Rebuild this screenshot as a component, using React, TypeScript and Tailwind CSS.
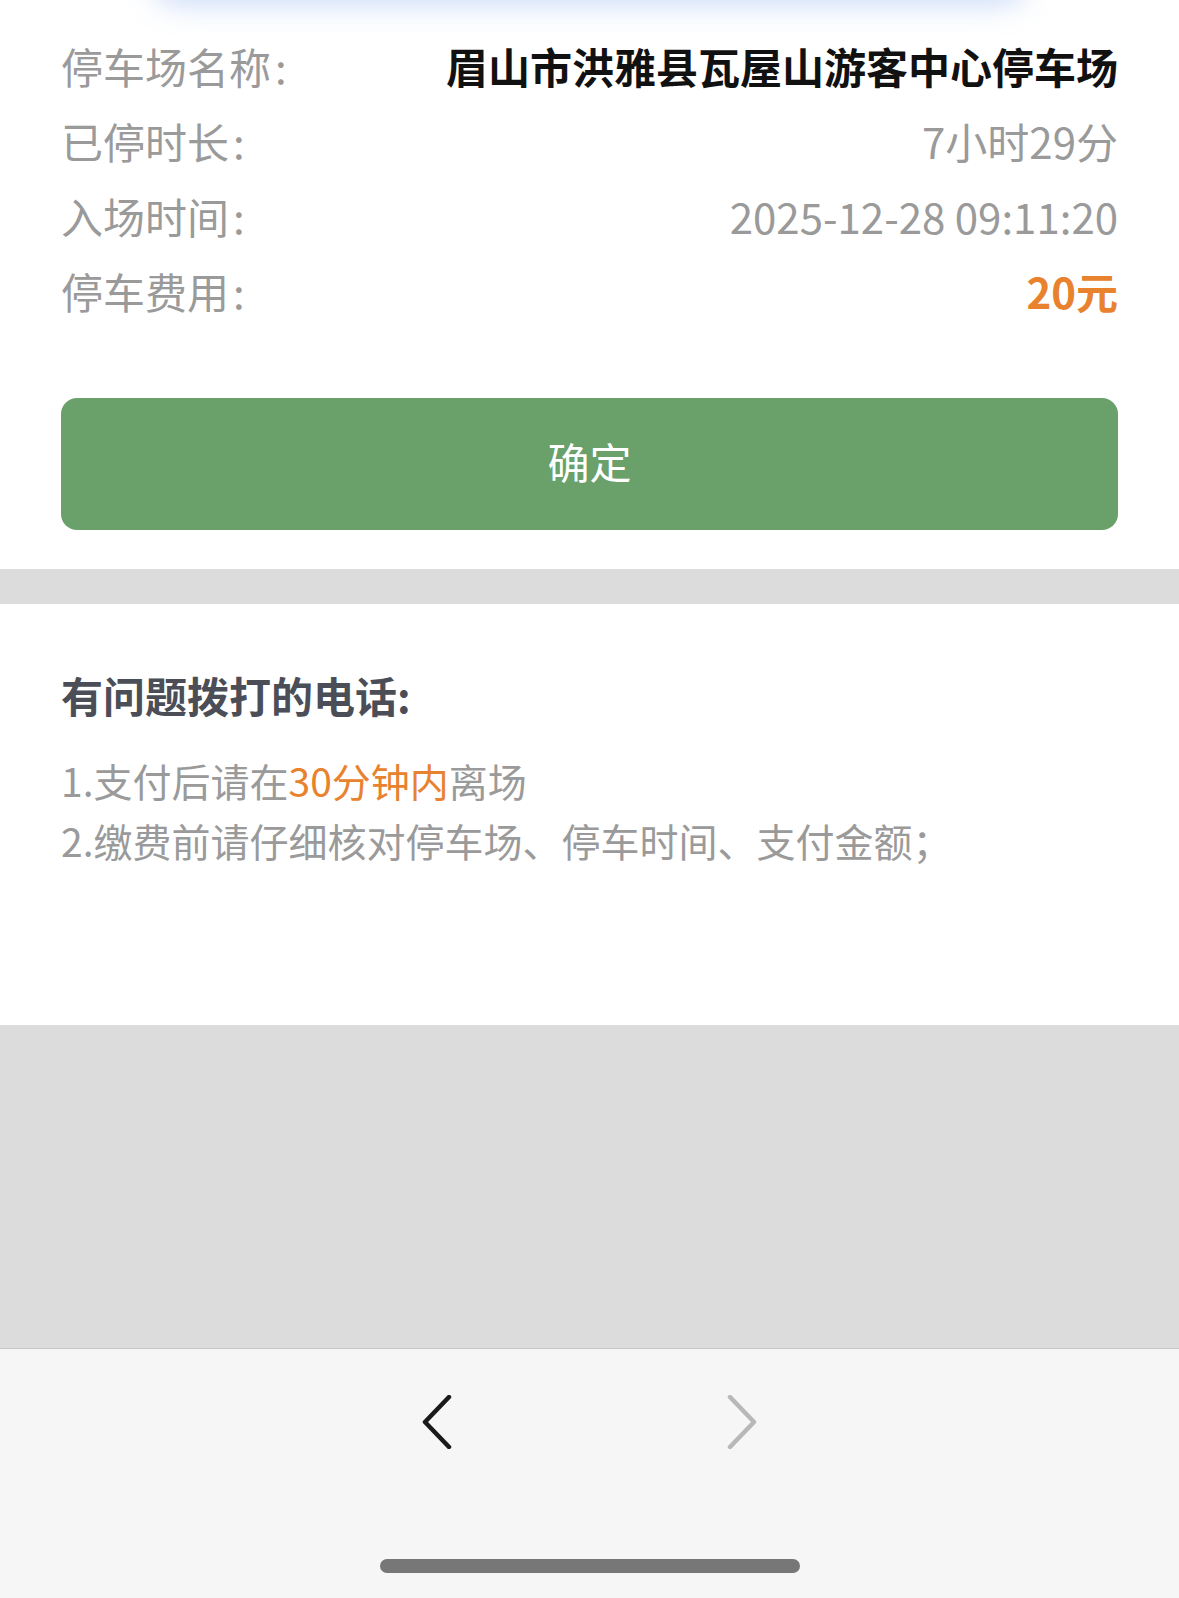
import React from "react";

const font = { fontFamily: '"Noto Sans CJK SC", "Noto Sans", sans-serif' };

function Row({ label, value, valueClass }: { label: string; value: string; valueClass: string }) {
  return (
    <div className="flex h-[75px] items-center justify-between">
      <span className="text-[42px] leading-none text-[#9a9a9a]">
        {label}
        <span className="ml-[4px]">:</span>
      </span>
      <span className={`text-[42px] leading-none ${valueClass}`}>{value}</span>
    </div>
  );
}

function Chevron({ dir, color }: { dir: "left" | "right"; color: string }) {
  return (
    <svg width="32" height="54" viewBox="0 0 32 54" fill="none">
      {dir === "left" ? (
        <path d="M27 2 L3 27 L27 52" stroke={color} strokeWidth="4.5" strokeLinecap="round" strokeLinejoin="round" />
      ) : (
        <path d="M5 2 L29 27 L5 52" stroke={color} strokeWidth="4.5" strokeLinecap="round" strokeLinejoin="round" />
      )}
    </svg>
  );
}

export default function App() {
  return (
    <div className="flex h-[1598px] w-[1179px] flex-col overflow-hidden bg-white" style={font}>
      {/* top shadow of card above */}
      <div className="relative h-0">
        <div className="absolute left-[150px] right-[150px] top-[-60px] h-[60px] rounded-[30px] bg-white shadow-[0_6px_28px_rgba(120,160,235,0.35)]" />
      </div>

      {/* info section */}
      <div className="px-[61px] pt-[28px]">
        <Row label="停车场名称" value="眉山市洪雅县瓦屋山游客中心停车场" valueClass="font-bold text-[#111111]" />
        <Row label="已停时长" value="7小时29分" valueClass="text-[#9a9a9a]" />
        <Row label="入场时间" value="2025-12-28 09:11:20" valueClass="text-[#9a9a9a]" />
        <Row label="停车费用" value="20元" valueClass="font-bold text-[#e8822e]" />
        <div className="mt-[70px] flex h-[132px] items-center justify-center rounded-[16px] bg-[#6aa06a] pb-[6px]">
          <span className="text-[42px] leading-none text-white">确定</span>
        </div>
      </div>
      <div className="h-[39px] shrink-0" />

      {/* gray band */}
      <div className="h-[35px] shrink-0 bg-[#dcdcdc]" />

      {/* tips section */}
      <div className="flex h-[421px] shrink-0 flex-col px-[61px] pt-[67px]">
        <div className="text-[42px] font-bold leading-[48px] text-[#4b4e57]">有问题拨打的电话:</div>
        <div className="mt-[31px] text-[39px] leading-[60px] text-[#9a9a9a]">
          <div>
            1.支付后请在<span className="text-[#e8822e]">30分钟内</span>离场
          </div>
          <div>2.缴费前请仔细核对停车场、停车时间、支付金额；</div>
        </div>
      </div>

      {/* gray filler */}
      <div className="h-[323px] shrink-0 bg-[#dcdcdc]" />

      {/* bottom browser bar */}
      <div className="flex flex-1 flex-col border-t border-[#c6c6c6] bg-[#f6f6f6]">
        <div className="mt-[46px] flex justify-center gap-[243px]">
          <div className="flex h-[54px] w-[60px] items-center justify-center">
            <Chevron dir="left" color="#1a1a1a" />
          </div>
          <div className="flex h-[54px] w-[60px] items-center justify-center">
            <Chevron dir="right" color="#b8b8b8" />
          </div>
        </div>
        <div className="flex-1" />
        <div className="mb-[25px] flex justify-center">
          <div className="h-[14px] w-[420px] rounded-full bg-[#777777]" />
        </div>
      </div>
    </div>
  );
}
